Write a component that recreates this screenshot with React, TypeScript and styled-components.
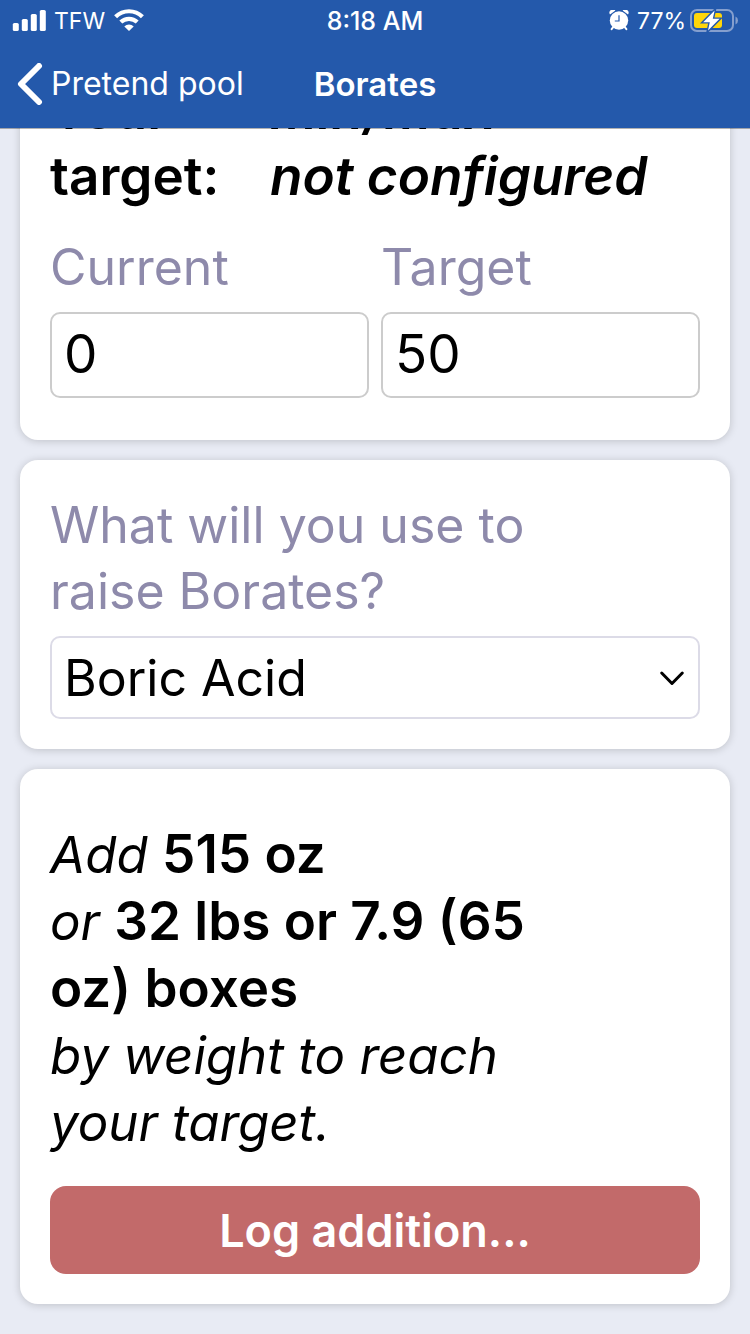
import React, { useState } from "react";
import styled, { createGlobalStyle } from "styled-components";

const GlobalStyle = createGlobalStyle`
  *, *::before, *::after { box-sizing: border-box; }
  body {
    margin: 0;
    background: #e8ebf4;
    color: #000;
    font-family: Inter, "Liberation Sans", sans-serif;
    font-size: 50px;
    line-height: 66px;
  }
`;

const Screen = styled.div`
  min-height: 100vh;
  display: flex;
  flex-direction: column;
`;

const Header = styled.header`
  position: relative;
  z-index: 1;
  background: #2459ab;
  color: #fff;
  box-shadow: 0 1px 0 rgba(0, 0, 0, 0.3);
`;

const StatusBar = styled.div`
  height: 40px;
  padding: 1px 12px 0;
  display: grid;
  grid-template-columns: 1fr auto 1fr;
  align-items: center;
  font-size: 23px;
  line-height: 28px;
`;

const StatusGroup = styled.div<{ $end?: boolean }>`
  display: flex;
  align-items: center;
  gap: 8px;
  justify-content: ${(p) => (p.$end ? "flex-end" : "flex-start")};
`;

const Clock = styled.time`
  font-size: 25px;
  font-weight: 500;
`;

const Battery = styled.span`
  display: flex;
  align-items: center;
  gap: 4px;
`;

const NavBar = styled.nav`
  height: 88px;
  padding: 0 17px;
  display: grid;
  grid-template-columns: 1fr auto 1fr;
  align-items: center;
  line-height: 40px;
`;

const BackLink = styled.a`
  display: flex;
  align-items: center;
  gap: 8px;
  color: inherit;
  text-decoration: none;
  font-size: 32px;
  white-space: nowrap;
`;

const Title = styled.h1`
  margin: 0;
  font-size: 33px;
  font-weight: 600;
`;

const Viewport = styled.main`
  flex: 1;
  overflow: hidden;
`;

const CardList = styled.div`
  display: flex;
  flex-direction: column;
  gap: 20px;
  padding: 0 20px 30px;
  margin-top: -81px;
`;

const Card = styled.section`
  display: flex;
  flex-direction: column;
  padding: 30px;
  background: #fff;
  border-radius: 18px;
  box-shadow: 0 1px 9px rgba(0, 0, 0, 0.18);
`;

const TargetCard = styled(Card)`
  gap: 25px;
  padding-bottom: 42px;
`;

const TargetSummary = styled.dl`
  margin: 0;
  display: grid;
  grid-template-columns: 184px 1fr;
  column-gap: 36px;
  font-size: 53px;
  font-weight: 600;
`;

const TargetValue = styled.dd`
  margin: 0;
  font-style: italic;
`;

const FieldRow = styled.div`
  display: grid;
  grid-template-columns: 1fr 1fr;
  gap: 12px;
`;

const Field = styled.div`
  display: flex;
  flex-direction: column;
  gap: 12px;
`;

const Label = styled.label`
  color: #8e8aab;
`;

const NumberInput = styled.input`
  width: 100%;
  height: 86px;
  padding: 0 12px 2px;
  border: 2px solid #ccc;
  border-radius: 10px;
  background: #fff;
  color: #000;
  font: inherit;
  font-size: 53px;
`;

const ProductCard = styled(Card)`
  padding-top: 32px;
`;

const SelectBox = styled.div`
  display: grid;
  align-items: center;

  > * {
    grid-area: 1 / 1;
  }

  > svg {
    justify-self: end;
    margin-right: 14px;
    pointer-events: none;
  }
`;

const Select = styled.select`
  appearance: none;
  width: 100%;
  height: 83px;
  padding: 0 12px;
  border: 2px solid #dcdbe7;
  border-radius: 10px;
  background: #fff;
  color: #000;
  font: inherit;
`;

const ResultCard = styled(Card)`
  gap: 30px;
  padding-top: 52px;
`;

const Result = styled.p`
  margin: 0;
  font-size: 51px;
  font-style: italic;
  line-height: 67px;
`;

const Amount = styled.strong`
  font-size: 53px;
  font-style: normal;
  font-weight: 600;
  line-height: 1;
`;

const LogButton = styled.button`
  height: 88px;
  padding: 2px 16px 0;
  border: 0;
  border-radius: 16px;
  background: #c26a6a;
  color: #fff;
  font: inherit;
  font-size: 45px;
  font-weight: 600;
`;

const SignalIcon = () => (
  <svg width="34" height="22" viewBox="-0.8 0 34 22" fill="#fff" aria-hidden="true">
    <rect x="0" y="13" width="6" height="8" rx="1.6" />
    <rect x="9" y="9" width="6" height="12" rx="1.6" />
    <rect x="18" y="4" width="6" height="17" rx="1.6" />
    <rect x="27" y="0" width="6" height="21" rx="1.6" />
  </svg>
);

const WifiIcon = () => (
  <svg width="32" height="24" viewBox="0 0 32 24" aria-hidden="true">
    <g fill="none" stroke="#fff" strokeWidth="4.2">
      <path d="M2.6 7.8 A19 19 0 0 1 29.4 7.8" />
      <path d="M7.8 13.1 A11.8 11.8 0 0 1 24.2 13.1" />
    </g>
    <path d="M16 22.1 L11.3 17.5 A6.8 6.8 0 0 1 20.7 17.5 Z" fill="#fff" />
  </svg>
);

const AlarmIcon = () => (
  <svg width="20" height="22" viewBox="0 0 20 22" aria-hidden="true">
    <g fill="#fff">
      <path d="M1 4.6 A3.4 3.4 0 0 1 6.4 0.5 Z" />
      <path d="M19 4.6 A3.4 3.4 0 0 0 13.6 0.5 Z" />
      <circle cx="10" cy="10.5" r="9.2" />
    </g>
    <path d="M4 17.4 L2.6 19.2 M16 17.4 L17.4 19.2" stroke="#fff" strokeWidth="2" strokeLinecap="round" />
    <path d="M10 5.2 V11 H5.8" fill="none" stroke="#2459ab" strokeWidth="1.2" />
  </svg>
);

const BatteryIcon = () => (
  <svg width="48" height="26" viewBox="0 0 48 26" aria-hidden="true">
    <rect x="1" y="2" width="42" height="21" rx="6" fill="none" stroke="#859fce" strokeWidth="2" />
    <path d="M45.5 8.5 Q48 9.5 48 12.5 Q48 15.5 45.5 16.5 Z" fill="#859fce" />
    <rect x="4" y="5" width="28" height="15" rx="3" fill="#ffd60a" />
    <path
      d="M24.6 2.4 L13.2 14.2 H19.8 L18 22.6 L29.6 10.8 H22.8 Z"
      fill="#fff"
      stroke="#2459ab"
      strokeWidth="2.8"
      paintOrder="stroke"
      strokeLinejoin="miter"
    />
  </svg>
);

const BackIcon = () => (
  <svg width="26" height="42" viewBox="0 0 26 42" aria-hidden="true">
    <path d="M22 3 L4 21 L22 39" fill="none" stroke="#fff" strokeWidth="6" strokeLinecap="round" strokeLinejoin="round" />
  </svg>
);

const ChevronIcon = () => (
  <svg width="28" height="18" viewBox="0 0 28 18" aria-hidden="true">
    <path d="M3.7 4 L14 14.5 L24.3 4" fill="none" stroke="#000" strokeWidth="3" strokeLinecap="round" strokeLinejoin="round" />
  </svg>
);

export default function App() {
  const [current, setCurrent] = useState("0");
  const [target, setTarget] = useState("50");

  return (
    <Screen>
      <GlobalStyle />
      <Header>
        <StatusBar>
          <StatusGroup>
            <SignalIcon />
            <span>TFW</span>
            <WifiIcon />
          </StatusGroup>
          <Clock>8:18 AM</Clock>
          <StatusGroup $end>
            <AlarmIcon />
            <Battery>
              77%
              <BatteryIcon />
            </Battery>
          </StatusGroup>
        </StatusBar>
        <NavBar>
          <BackLink href="#pool">
            <BackIcon />
            Pretend pool
          </BackLink>
          <Title>Borates</Title>
        </NavBar>
      </Header>
      <Viewport>
        <CardList>
          <TargetCard>
            <TargetSummary>
              <dt>Your target:</dt>
              <TargetValue>
                min/max
                <br />
                not configured
              </TargetValue>
            </TargetSummary>
            <FieldRow>
              <Field>
                <Label htmlFor="current">Current</Label>
                <NumberInput
                  id="current"
                  inputMode="decimal"
                  value={current}
                  onChange={(e) => setCurrent(e.target.value)}
                />
              </Field>
              <Field>
                <Label htmlFor="target">Target</Label>
                <NumberInput
                  id="target"
                  inputMode="decimal"
                  value={target}
                  onChange={(e) => setTarget(e.target.value)}
                />
              </Field>
            </FieldRow>
          </TargetCard>
          <ProductCard>
            <Field>
              <Label htmlFor="product">
                What will you use to
                <br />
                raise Borates?
              </Label>
              <SelectBox>
                <Select id="product" defaultValue="boric">
                  <option value="boric">Boric Acid</option>
                  <option value="borax">Borax</option>
                </Select>
                <ChevronIcon />
              </SelectBox>
            </Field>
          </ProductCard>
          <ResultCard>
            <Result>
              Add <Amount>515 oz</Amount>
              <br />
              or{" "}
              <Amount>
                32 lbs or 7.9 (65
                <br />
                oz) boxes
              </Amount>
              <br />
              by weight to reach
              <br />
              your target.
            </Result>
            <LogButton type="button">Log addition...</LogButton>
          </ResultCard>
        </CardList>
      </Viewport>
    </Screen>
  );
}
